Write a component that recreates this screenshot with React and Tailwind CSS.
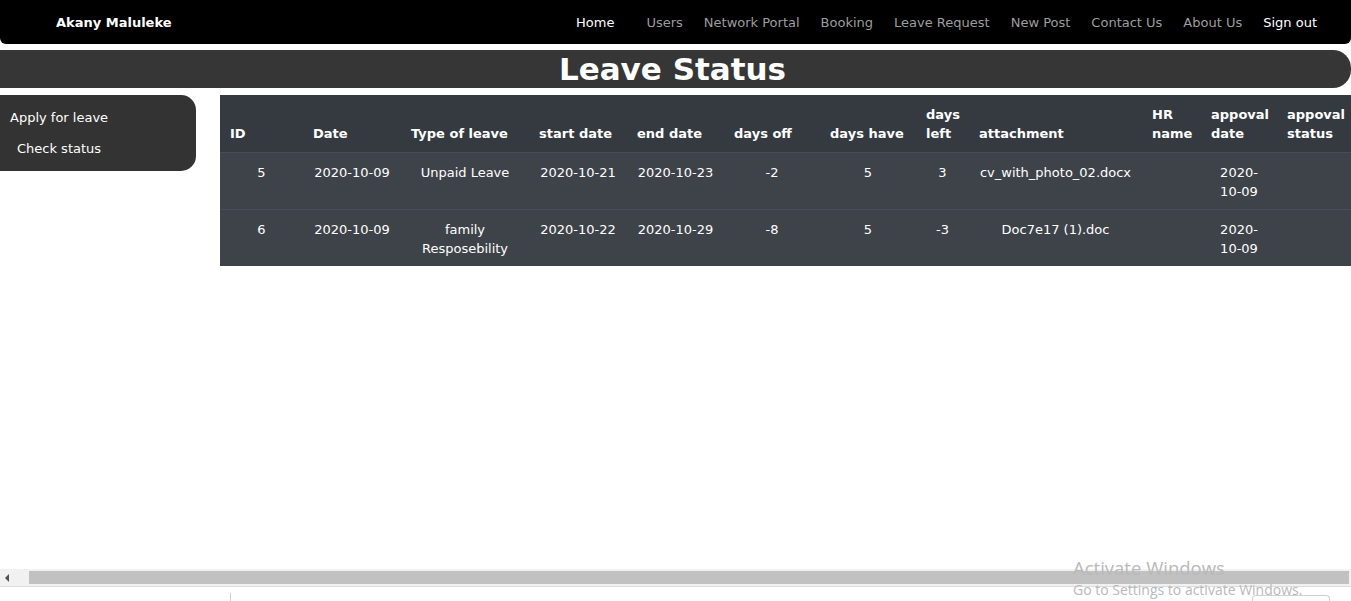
import React from 'react'

const navLinks = [
  { label: 'Users' },
  { label: 'Network Portal' },
  { label: 'Booking' },
  { label: 'Leave Request' },
  { label: 'New Post' },
  { label: 'Contact Us' },
  { label: 'About Us' },
]

const columns = [
  { label: 'ID', w: 'w-[83px]' },
  { label: 'Date', w: 'w-[98px]' },
  { label: 'Type of leave', w: 'w-[128px]' },
  { label: 'start date', w: 'w-[98px]' },
  { label: 'end date', w: 'w-[97px]' },
  { label: 'days off', w: 'w-[96px]' },
  { label: 'days have', w: 'w-[96px]' },
  { label: 'days left', w: 'w-[53px]' },
  { label: 'attachment', w: 'w-[173px]' },
  { label: 'HR name', w: 'w-[59px]' },
  { label: 'appoval date', w: 'w-[76px]' },
  { label: 'appoval status', w: 'w-[80px]' },
]

const leaves = [
  {
    id: 5,
    date: '2020-10-09',
    type: 'Unpaid Leave',
    start: '2020-10-21',
    end: '2020-10-23',
    off: '-2',
    have: '5',
    left: '3',
    file: 'cv_with_photo_02.docx',
    hr: '',
    approved: '2020-10-09',
    status: '',
  },
  {
    id: 6,
    date: '2020-10-09',
    type: 'family Resposebility',
    start: '2020-10-22',
    end: '2020-10-29',
    off: '-8',
    have: '5',
    left: '-3',
    file: 'Doc7e17 (1).doc',
    hr: '',
    approved: '2020-10-09',
    status: '',
  },
]

function Navbar() {
  return (
    <nav className="h-[44px] pt-[2px] bg-black rounded-b-md flex items-center text-[13px]">
      <span className="pl-[56px] font-bold text-white">Akany Maluleke</span>
      <ul className="ml-auto flex items-center pr-[34px]">
        <li className="text-white mr-[32px]">Home</li>
        {navLinks.map(link => (
          <li key={link.label} className="text-[#9d9d9d] mr-[21px]">
            {link.label}
          </li>
        ))}
        <li className="text-white">Sign out</li>
      </ul>
    </nav>
  )
}

function Sidebar() {
  return (
    <aside className="w-[196px] shrink-0 self-start bg-[#333333] rounded-r-[15px] py-[13px] text-[13px] leading-[19px] text-white">
      <ul>
        <li className="pl-[10px]">Apply for leave</li>
        <li className="pl-[17px] mt-[12px]">Check status</li>
      </ul>
    </aside>
  )
}

function LeaveTable() {
  return (
    <table className="shrink-0 table-fixed border-collapse w-[1137px] text-[13px] leading-[19px] text-white">
      <thead className="bg-[#343a40]">
        <tr>
          {columns.map(col => (
            <th
              key={col.label}
              className={`${col.w} px-[10px] pt-[10px] pb-[9px] align-bottom text-left font-bold`}
            >
              {col.label}
            </th>
          ))}
        </tr>
      </thead>
      <tbody className="bg-[#3e434a]">
        {leaves.map(row => (
          <tr key={row.id} className="border-t border-[#474d55]">
            <td className="px-[10px] pt-[10px] pb-[8px] align-top text-center">{row.id}</td>
            <td className="px-[10px] pt-[10px] pb-[8px] align-top text-center">{row.date}</td>
            <td className="px-[10px] pt-[10px] pb-[8px] align-top text-center">{row.type}</td>
            <td className="px-[10px] pt-[10px] pb-[8px] align-top text-center">{row.start}</td>
            <td className="px-[10px] pt-[10px] pb-[8px] align-top text-center">{row.end}</td>
            <td className="px-[10px] pt-[10px] pb-[8px] align-top text-center">{row.off}</td>
            <td className="px-[10px] pt-[10px] pb-[8px] align-top text-center">{row.have}</td>
            <td className="px-[10px] pt-[10px] pb-[8px] align-top text-center">{row.left}</td>
            <td className="px-[10px] pt-[10px] pb-[8px] align-top text-center whitespace-nowrap">{row.file}</td>
            <td className="px-[10px] pt-[10px] pb-[8px] align-top text-center">{row.hr}</td>
            <td className="px-[10px] pt-[10px] pb-[8px] align-top text-center">
              {row.approved.slice(0, 5)}
              <wbr />
              {row.approved.slice(5)}
            </td>
            <td className="px-[10px] pt-[10px] pb-[8px] align-top text-center">{row.status}</td>
          </tr>
        ))}
      </tbody>
    </table>
  )
}

export default function App() {
  return (
    <div
      className="relative w-[1351px] h-[601px] overflow-hidden bg-white flex flex-col"
      style={{ fontFamily: '"DejaVu Sans", Verdana, sans-serif' }}
    >
      <div className="flex-1 min-h-0">
        <Navbar />

        {/* Title bar */}
        <div className="mt-[6px] h-[38px] bg-[#363636] rounded-r-[18px] flex items-center justify-center">
          <h1 className="text-white font-bold text-[31px] leading-none -ml-[6px]">Leave Status</h1>
        </div>

        <div className="mt-[7px] flex gap-[24px]">
          <Sidebar />
          <LeaveTable />
        </div>
      </div>

      {/* Horizontal scrollbar */}
      <div className="h-[17px] bg-[#f1f1f1] flex items-center">
        <div className="w-[17px] h-full flex items-center justify-center">
          <div className="w-0 h-0 border-y-[4px] border-y-transparent border-r-[4px] border-r-[#505050] -ml-[4px]" />
        </div>
        <div className="ml-[12px] w-[1320px] h-[13px] bg-[#c1c1c1]" />
      </div>
      <div className="h-[2px] bg-white border-t border-[#dcdcdc]" />
      <div className="h-[13px] bg-white flex items-end">
        <div className="ml-[230px] w-px h-[8px] bg-[#cfcfcf]" />
        <div className="ml-[1021px] w-[78px] h-[6px] border border-b-0 border-[#d0d0d0] rounded-t-[4px]" />
      </div>

      {/* Activate Windows watermark */}
      <div
        className="absolute left-[1073px] top-[556px] text-[#b9b9b9] pointer-events-none"
        style={{ fontFamily: '"Open Sans", "Noto Sans", sans-serif' }}
      >
        <div className="text-[18.5px] leading-[24px]">Activate Windows</div>
        <div className="text-[14px] leading-[19px]">Go to Settings to activate Windows.</div>
      </div>
    </div>
  )
}
